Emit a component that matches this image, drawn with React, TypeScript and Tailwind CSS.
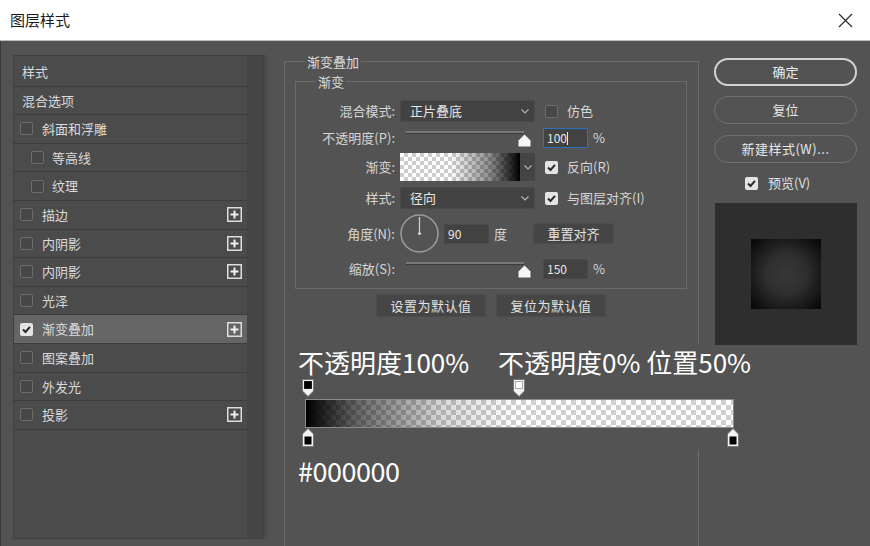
import React from 'react';

const rows = [
  { label: '样式', box: false },
  { label: '混合选项', box: false },
  { label: '斜面和浮雕', box: true },
  { label: '等高线', box: true, sub: true },
  { label: '纹理', box: true, sub: true },
  { label: '描边', box: true, plus: true },
  { label: '内阴影', box: true, plus: true },
  { label: '内阴影', box: true, plus: true },
  { label: '光泽', box: true },
  { label: '渐变叠加', box: true, plus: true, checked: true, active: true },
  { label: '图案叠加', box: true },
  { label: '外发光', box: true },
  { label: '投影', box: true, plus: true },
];

function Check({ checked }: { checked?: boolean }) {
  if (checked) {
    return (
      <span className="w-[13px] h-[13px] shrink-0 rounded-[2px] bg-[#e4e4e4] flex items-center justify-center">
        <svg width="11" height="11" viewBox="0 0 11 11">
          <path d="M2 5.5 L4.5 8 L9 2.8" fill="none" stroke="#2a2a2a" strokeWidth="2" />
        </svg>
      </span>
    );
  }
  return <span className="block w-[13px] h-[13px] shrink-0 rounded-[2px] border border-[#6c6c6c] bg-[#474747]" />;
}

function Plus() {
  return (
    <svg width="15" height="15" viewBox="0 0 15 15">
      <rect x="0.75" y="0.75" width="13.5" height="13.5" fill="none" stroke="#dedede" strokeWidth="1.5" />
      <path d="M7.5 3.5 V11.5 M3.5 7.5 H11.5" stroke="#f0f0f0" strokeWidth="2" />
    </svg>
  );
}

function Chevron() {
  return (
    <svg width="8" height="5" viewBox="0 0 8 5">
      <polyline points="0.5,0.5 4,4 7.5,0.5" fill="none" stroke="#b5b5b5" strokeWidth="1.1" />
    </svg>
  );
}

function Thumb() {
  return (
    <svg width="13" height="13" viewBox="0 0 13 13">
      <path d="M6.5 0.5 L12.5 6.5 V12.5 H0.5 V6.5 Z" fill="#f5f5f5" />
    </svg>
  );
}

function Slider() {
  return (
    <div className="relative w-[135px] h-[20px]">
      <div className="absolute left-[6px] w-[118px] top-[3px] h-[3px] bg-[#787878] border-b border-[#3c3c3c]" />
      <div className="absolute left-[118px] top-[6px]">
        <Thumb />
      </div>
    </div>
  );
}

function StopDown({ fill }: { fill: string }) {
  return (
    <svg width="12" height="18" viewBox="0 0 12 18">
      <path d="M0.5 0.5 H11.5 V12 L6 17.5 L0.5 12 Z" fill="#f2f2f2" stroke="#777" strokeWidth="1" />
      <rect x="2.5" y="2.5" width="7" height="7" fill={fill} stroke={fill === '#fff' ? '#999' : '#000'} strokeWidth="0.8" />
    </svg>
  );
}

function StopUp() {
  return (
    <svg width="12" height="19" viewBox="0 0 12 19">
      <path d="M6 0.5 L11.5 6 V18.5 H0.5 V6 Z" fill="#f2f2f2" stroke="#777" strokeWidth="1" />
      <rect x="2.5" y="8.5" width="7" height="8" fill="#000" />
    </svg>
  );
}

export default function App() {
  return (
    <div className="relative w-[870px] h-[546px] overflow-hidden bg-[#535353] flex flex-col text-[13px] text-[#d6d6d6] font-['Noto_Sans_CJK_SC','Noto_Sans',sans-serif]">
      {/* title bar */}
      <div className="h-[41px] shrink-0 bg-white border-b border-[#bdbdbd] flex items-center justify-between pl-[10px] pr-[17px]">
        <span className="text-[15px] text-[#1b1b1b]">图层样式</span>
        <svg width="15" height="15" viewBox="0 0 15 15">
          <path d="M1 1 L14 14 M14 1 L1 14" stroke="#2a2a2a" strokeWidth="1.2" />
        </svg>
      </div>

      <div className="flex-1 flex border-l border-[#3a3a3a]">
        {/* left list */}
        <div className="mt-[14px] ml-[12px] w-[251px] h-[484px] flex border border-[#404040] shadow-[3px_0_0_#4a4a4a]">
          <div className="w-[233px] pt-[2px] bg-[#4b4b4b]">
            {rows.map((r, i) => (
              <div
                key={i}
                className={`h-[28.6px] flex items-center border-b border-[#3c3c3c] ${r.active ? 'bg-[#656565]' : 'bg-[#4b4b4b]'} ${!r.box ? 'pl-[8px]' : r.sub ? 'pl-[17px]' : 'pl-[6px]'} pr-[5px]`}
              >
                {r.box && <Check checked={r.checked} />}
                <span className={`${r.box ? (r.sub ? 'ml-[8px]' : 'ml-[9px]') : ''} flex-1 text-[#dadada]`}>{r.label}</span>
                {r.plus && <Plus />}
              </div>
            ))}
          </div>
          <div className="flex-1 bg-[#454545] border-l border-[#434343]" />
        </div>

        {/* center */}
        <div className="ml-[20px] w-[415px]">
          <fieldset className="mt-[12px] h-[520px] border border-[#6b6b6b] px-[10px]">
            <legend className="ml-[10px] px-[2px] leading-[17px] text-[#dcdcdc]">渐变叠加</legend>
            <fieldset className="mt-[3px] w-[392px] border border-[#6b6b6b] pb-[9px]">
              <legend className="ml-[20px] px-[2px] leading-[17px] text-[#dcdcdc]">渐变</legend>

              <div className="mt-[10px] h-[22px] flex items-center">
                <span className="w-[104px] shrink-0 text-right pr-[5px]">混合模式:</span>
                <div className="w-[135px] h-[22px] bg-[#424242] border border-[#4a4a4a] rounded-[2px] flex items-center justify-between pl-[9px] pr-[5px]">
                  <span className="text-[#e6e6e6]">正片叠底</span>
                  <Chevron />
                </div>
                <span className="ml-[10px]"><Check /></span>
                <span className="ml-[9px]">仿色</span>
              </div>

              <div className="mt-[6px] h-[20px] flex items-center">
                <span className="w-[104px] shrink-0 text-right pr-[5px]">不透明度(P):</span>
                <Slider />
                <div className="ml-[8px] w-[45px] h-[20px] bg-[#424242] border border-[#2f6fc0] flex items-center pl-[3px] text-[12px] text-[#e8e8e8]">
                  100<span className="w-px h-[13px] bg-[#e8e8e8]" />
                </div>
                <span className="ml-[5px]">%</span>
              </div>

              <div className="mt-[5px] h-[28px] flex items-center">
                <span className="w-[104px] shrink-0 text-right pr-[5px]">渐变:</span>
                <div className="w-[120px] h-[28px] [background-image:linear-gradient(to_right,rgba(0,0,0,0)_42%,rgba(0,0,0,0.45)_75%,#000_100%),conic-gradient(#cdcdcd_25%,#fff_0_50%,#cdcdcd_0_75%,#fff_0)] [background-size:100%_100%,8px_8px]" />
                <div className="w-[15px] h-[28px] bg-[#444] flex items-center justify-center"><Chevron /></div>
                <span className="ml-[10px]"><Check checked /></span>
                <span className="ml-[9px]">反向(R)</span>
              </div>

              <div className="mt-[6px] h-[22px] flex items-center">
                <span className="w-[104px] shrink-0 text-right pr-[5px]">样式:</span>
                <div className="w-[135px] h-[22px] bg-[#424242] border border-[#4a4a4a] rounded-[2px] flex items-center justify-between pl-[9px] pr-[5px]">
                  <span className="text-[#e6e6e6]">径向</span>
                  <Chevron />
                </div>
                <span className="ml-[10px]"><Check checked /></span>
                <span className="ml-[9px]">与图层对齐(I)</span>
              </div>

              <div className="mt-[5px] h-[39px] flex items-center">
                <span className="w-[104px] shrink-0 text-right pr-[5px]">角度(N):</span>
                <svg width="39" height="39" viewBox="0 0 39 39">
                  <circle cx="19.5" cy="19.5" r="18.5" fill="none" stroke="#9c9c9c" strokeWidth="1.5" />
                  <path d="M19.5 19.5 V3" stroke="#d0d0d0" strokeWidth="1.2" />
                  <circle cx="19.5" cy="19.5" r="1.6" fill="#d0d0d0" />
                </svg>
                <div className="ml-[5px] w-[45px] h-[20px] bg-[#424242] border border-[#4a4a4a] flex items-center pl-[3px] text-[12px] text-[#e8e8e8]">90</div>
                <span className="ml-[5px]">度</span>
                <div className="ml-[26px] w-[81px] h-[21px] bg-[#454545] border border-[#4c4c4c] rounded-[3px] flex items-center justify-center text-[#e2e2e2]">重置对齐</div>
              </div>

              <div className="mt-[6px] h-[20px] flex items-center">
                <span className="w-[104px] shrink-0 text-right pr-[5px]">缩放(S):</span>
                <Slider />
                <div className="ml-[8px] w-[45px] h-[20px] bg-[#424242] border border-[#4a4a4a] flex items-center pl-[3px] text-[12px] text-[#e8e8e8]">150</div>
                <span className="ml-[5px]">%</span>
              </div>
            </fieldset>

            <div className="mt-[5px] w-[392px] flex justify-center gap-[10px]">
              <div className="w-[110px] h-[23px] bg-[#464646] border border-[#4c4c4c] rounded-[2px] flex items-center justify-center text-[#e2e2e2] tracking-[0.5px]">设置为默认值</div>
              <div className="w-[110px] h-[23px] bg-[#464646] border border-[#4c4c4c] rounded-[2px] flex items-center justify-center text-[#e2e2e2] tracking-[0.5px]">复位为默认值</div>
            </div>
          </fieldset>
        </div>

        {/* right */}
        <div className="ml-[15px] mt-[17px] w-[143px] flex flex-col">
          <div className="h-[28px] rounded-full border-2 border-[#d2d2d2] flex items-center justify-center text-[#ececec]">确定</div>
          <div className="mt-[10px] h-[28px] rounded-full border-[1.5px] border-[#727272] flex items-center justify-center text-[#e6e6e6]">复位</div>
          <div className="mt-[11px] h-[28px] rounded-full border-[1.5px] border-[#727272] flex items-center justify-center text-[#e6e6e6] tracking-[0.5px]">新建样式(W)...</div>
          <div className="mt-[12px] h-[16px] flex items-center pl-[31px]">
            <Check checked />
            <span className="ml-[10px] text-[#e0e0e0]">预览(V)</span>
          </div>
          <div className="mt-[12px] ml-px w-[142px] h-[142px] bg-[#2e2e2e] flex items-center justify-center">
            <div className="w-[70px] h-[70px] bg-[radial-gradient(circle,#373737_0%,#2f2f2f_40%,#050505_100%)]" />
          </div>
        </div>
      </div>

      {/* annotation overlay */}
      <div className="absolute left-[290px] top-[345px] w-[470px]">
        <div className="h-[105px] bg-[#535353]">
          <div className="flex pl-[8px] pt-[1px] text-[26px] leading-[32px] text-white">
            <span className="w-[200px]">不透明度100%</span>
            <span>不透明度0% 位置50%</span>
          </div>
          <div className="relative h-[20px] mt-[1px]">
            <div className="absolute left-[12px] top-0"><StopDown fill="#000" /></div>
            <div className="absolute left-[223px] top-0"><StopDown fill="#fff" /></div>
          </div>
          <div className="ml-[15px] w-[429px] h-[29px] border border-[#8a8a8a] [background-image:linear-gradient(to_right,#000_0%,rgba(0,0,0,0.6)_12%,rgba(0,0,0,0.15)_32%,rgba(0,0,0,0)_50%),conic-gradient(#cfcfcf_25%,#fff_0_50%,#cfcfcf_0_75%,#fff_0)] [background-size:100%_100%,10px_10px]" />
          <div className="relative h-[19px]">
            <div className="absolute left-[12px] top-0"><StopUp /></div>
            <div className="absolute left-[437px] top-0"><StopUp /></div>
          </div>
        </div>
        <div className="pl-[8px] mt-[4px] text-[27px] leading-[34px] text-white tracking-[-0.5px]">#000000</div>
      </div>
    </div>
  );
}
